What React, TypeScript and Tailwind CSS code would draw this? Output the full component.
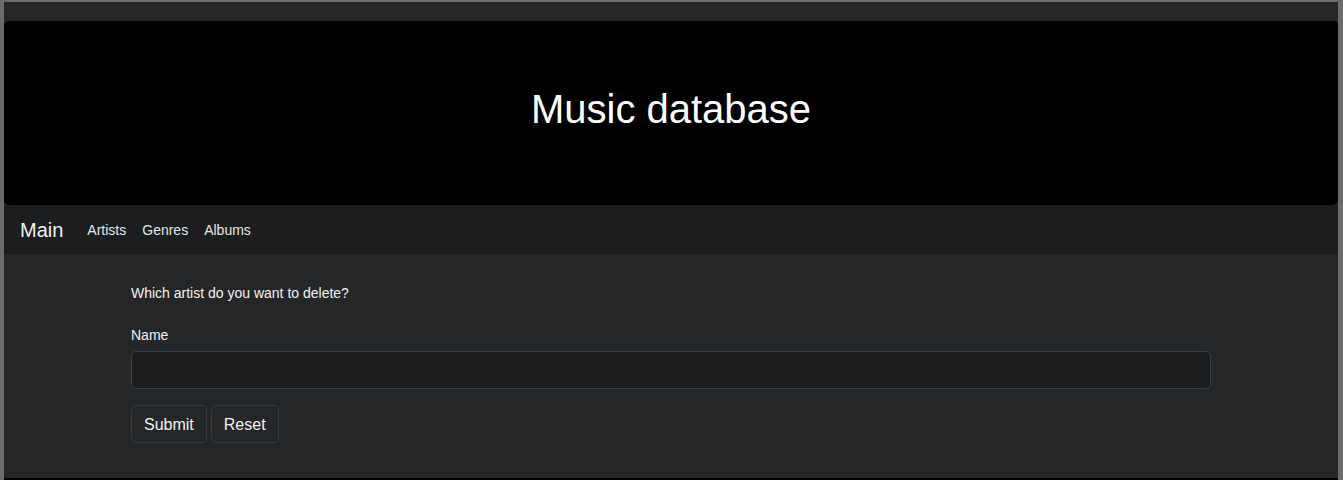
import React from "react";

export default function App() {
  return (
    <div
      className="w-[1343px] h-[480px] overflow-hidden bg-[#6b6b6b] pl-[4px] pr-[5px] pt-[2px]"
      style={{ fontFamily: '"Liberation Sans", Arial, sans-serif' }}
    >
      <div className="bg-[#252628] pt-[19px] h-[476px]">
        <header className="h-[184px] bg-black rounded-[5px] flex items-center justify-center">
          <h1 className="text-[40px] leading-[48px] mb-2 text-white font-normal">
            Music database
          </h1>
        </header>
        <nav className="h-[49px] pt-px bg-[#1c1d1f] flex items-center px-[16px]">
          <span className="text-[20px] leading-[30px] text-[#f2f2f2] mr-[16px]">Main</span>
          <a className="text-[14px] leading-[21px] text-[#e6e6e6] px-[8px]">Artists</a>
          <a className="text-[14px] leading-[21px] text-[#e6e6e6] px-[8px]">Genres</a>
          <a className="text-[14px] leading-[21px] text-[#e6e6e6] px-[8px]">Albums</a>
        </nav>
        <main className="pt-[29px]">
          <div className="w-[1080px] mx-auto">
            <p className="text-[14px] leading-[21px] text-[#f2f2f2]">
              Which artist do you want to delete?
            </p>
            <label className="block mt-[21px] text-[14px] leading-[21px] text-[#f2f2f2]">
              Name
            </label>
            <input
              type="text"
              className="mt-[5px] block w-full h-[38px] rounded-[5px] bg-[#1b1c1e] border border-[#3a3f45] outline-none px-3 text-[#f2f2f2]"
            />
            <div className="flex gap-[4px] mt-[16px]">
              <button className="h-[38px] pt-px px-[12px] rounded-[5px] border border-[#363b40] text-[16px] text-[#f2f2f2] bg-transparent">
                Submit
              </button>
              <button className="h-[38px] pt-px px-[12px] rounded-[5px] border border-[#363b40] text-[16px] text-[#f2f2f2] bg-transparent">
                Reset
              </button>
            </div>
          </div>
        </main>
      </div>
      <div className="h-[2px] bg-black" />
    </div>
  );
}
